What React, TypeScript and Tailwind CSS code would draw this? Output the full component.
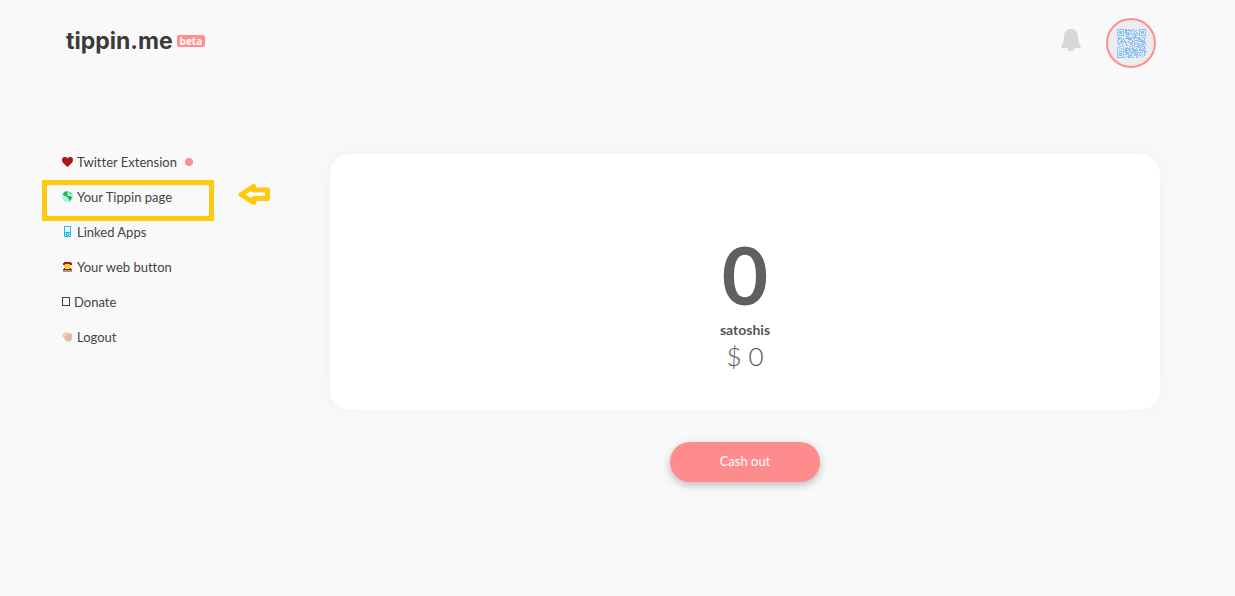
import React from "react";

const QR_SIZE = 29;

// The three corner squares every QR code carries
function finderModule(x: number, y: number): boolean | null {
  const corners = [
    [0, 0],
    [QR_SIZE - 7, 0],
    [0, QR_SIZE - 7],
  ];
  for (const [cx, cy] of corners) {
    const dx = x - cx;
    const dy = y - cy;
    if (dx >= -1 && dx <= 7 && dy >= -1 && dy <= 7) {
      const d = Math.max(Math.abs(dx - 3), Math.abs(dy - 3));
      return d !== 2 && d !== 4;
    }
  }
  return null;
}

function buildQrPath() {
  let d = "";
  let seed = 7919;
  for (let y = 0; y < QR_SIZE; y++) {
    for (let x = 0; x < QR_SIZE; x++) {
      seed = (seed * 16807) % 2147483647;
      const finder = finderModule(x, y);
      const on = finder === null ? seed % 100 < 52 : finder;
      if (on) d += `M${x} ${y}h1v1h-1z`;
    }
  }
  return d;
}

const qrPath = buildQrPath();

function QrCode() {
  return (
    <svg className="size-[29px]" viewBox="0 0 29 29" shapeRendering="crispEdges" aria-hidden="true">
      <rect width="29" height="29" fill="#dfebf8" />
      <path d={qrPath} fill="#8fbfec" />
    </svg>
  );
}

function BellIcon() {
  return (
    <svg className="h-6 w-5" viewBox="0 0 20 24" fill="#d8d8d8" aria-hidden="true">
      <path d="M10 1C6 1 3.200 3.500 3 8c-.2 5-.8 7.500-2.600 9.800-.5.700-.4 2.200.6 2.200h18c1 0 1.100-1.500.600-2.200C17.800 15.500 17.200 13 17 8 16.800 3.500 14 1 10 1Z" />
      <path d="M6.500 20a3.500 3.200 0 0 0 7 0Z" />
    </svg>
  );
}

function HeartIcon() {
  return (
    <svg className="h-[10px] w-[11px]" viewBox="0 0 11 10" fill="#b01515" aria-hidden="true">
      <path d="M5.500 1.600C4.600 0 2.800-.3 1.400.3 0 1-.3 3 .3 4.500 1.200 6.500 3.600 8.200 5.500 10c1.900-1.800 4.300-3.500 5.200-5.500.600-1.500.300-3.500-1.100-4.200C8.200-.3 6.400 0 5.500 1.600Z" />
    </svg>
  );
}

function GlobeIcon() {
  return (
    <svg className="size-[11px]" viewBox="0 0 11 11" aria-hidden="true">
      <circle cx="5.500" cy="5.500" r="5.500" fill="#a5f3ee" />
      <path d="M1 2.500 3 .5h3V2H5v1h1v1H5v1h4v1h1v1L9 8v1L7 10V8H6V6H4V5H2V4H1Z" fill="#2fb344" />
      <path d="M7.500.8 9.500 2.500 9 3.500 8 3Z" fill="#2fb344" />
    </svg>
  );
}

function PhoneIcon() {
  return (
    <svg className="size-[11px]" viewBox="0 0 11 11" aria-hidden="true">
      <path d="M2 0h7v11H2Z" fill="#25bdf0" />
      <path d="M3 1h5v5H3ZM3 7h1v1H3ZM5 8h1v1H5ZM7 7h1v1H7ZM3 9h1v1H3ZM7 9h1v1H7Z" fill="#f4fbfe" />
    </svg>
  );
}

function GuardIcon() {
  return (
    <svg className="h-[10px] w-[11px]" viewBox="0 0 11 10" aria-hidden="true">
      <path d="M2 0h7v1h1v2H1V1h1Z" fill="#b01515" />
      <path d="M1 7h1V6h7v1h1v1H1Z" fill="#b01515" />
      <path d="M3 2h5v1h1v2H8v2H3V5H2V3h1Z" fill="#fcd03c" />
      <path d="M1 8h9v2H1Z" fill="#999" />
    </svg>
  );
}

function WaveIcon() {
  return (
    <svg className="size-[11px]" viewBox="0 0 11 11" aria-hidden="true">
      <path
        d="M1 4.500 5 9M2 2.500 6 7M4 1.500 7.500 5.500M6.500 2 9 5M9.500 2.500V7"
        stroke="#e2b9a3"
        strokeWidth="1.200"
        strokeLinecap="round"
      />
      <path d="M3 5.500 6 3.500 9 5l1-2v5L8 10.500H5L2.500 8Z" fill="#e2b9a3" />
    </svg>
  );
}

const navItems = [
  { label: "Twitter Extension", icon: <HeartIcon />, dot: true },
  { label: "Your Tippin page", icon: <GlobeIcon />, highlighted: true },
  { label: "Linked Apps", icon: <PhoneIcon /> },
  { label: "Your web button", icon: <GuardIcon /> },
  { label: "Donate", icon: <span className="h-[9px] w-2 border border-[#444]" /> },
  { label: "Logout", icon: <WaveIcon /> },
];

function Highlight() {
  return (
    <>
      <span className="pointer-events-none absolute top-px -left-5 h-[41px] w-[172px] border-[5px] border-[#ffc90e]" />
      <svg
        className="pointer-events-none absolute top-[5px] left-44 h-[21px] w-8"
        viewBox="0 0 32 21"
        aria-hidden="true"
      >
        <path
          d="M3 10.500 15.500 2.500V6H29.500V14.500H15.500V18.500Z"
          fill="#fff"
          stroke="#ffc90e"
          strokeWidth="5"
          strokeLinejoin="round"
        />
      </svg>
    </>
  );
}

export default function App() {
  return (
    <div className="min-h-screen bg-[#f9f9f9] font-['Lato',sans-serif] text-[#444] [font-variant-ligatures:none]">
      <header className="flex h-[86px] items-center justify-between pr-[79px] pl-[66px]">
        <a href="#" className="flex items-center gap-1 pb-1">
          <span className="font-['Inter',sans-serif] text-[23px] leading-8 font-bold text-[#3a3a3a]">
            tippin.me
          </span>
          <span className="rounded-xs bg-[#ff8e8e] px-[3px] font-['Open_Sans',sans-serif] text-[10px] leading-3 font-bold text-white">
            beta
          </span>
        </a>
        <div className="flex items-center gap-[25px]">
          <button type="button" aria-label="Notifications" className="pb-1.5">
            <BellIcon />
          </button>
          <button
            type="button"
            aria-label="Profile"
            className="flex size-[50px] items-center justify-center rounded-full border-2 border-[#ff8e8e] bg-[#ececee]"
          >
            <QrCode />
          </button>
        </div>
      </header>

      <div className="flex items-start pt-[58px] pr-[75px] pl-[62px]">
        <nav className="w-[268px] shrink-0">
          <ul>
            {navItems.map((item) => (
              <li key={item.label} className="relative flex h-[35px] items-center">
                <a href="#" className="flex items-center gap-1 text-[13px] leading-5">
                  {item.icon}
                  {item.label}
                </a>
                {item.dot && <span className="ml-2 size-2 rounded-full bg-[#ff8e8e]" />}
                {item.highlighted && <Highlight />}
              </li>
            ))}
          </ul>
        </nav>

        <main className="flex flex-1 flex-col items-center pt-[10px]">
          <section className="flex w-full flex-col items-center rounded-[20px] bg-white pt-[78px] pb-[38px] shadow-[0_0_20px_rgba(0,0,0,0.04)]">
            <p className="text-[80px] leading-[84px] font-bold text-[#606060]">0</p>
            <p className="mt-1 text-sm font-bold text-[#555]">satoshis</p>
            <p className="text-[26px] leading-8 font-light text-[#555]">$ 0</p>
          </section>
          <button
            type="button"
            className="mt-8 h-10 w-[150px] rounded-full bg-[#ff8c8c] text-[13px] text-white shadow-[0_3px_8px_rgba(0,0,0,0.25)]"
          >
            Cash out
          </button>
        </main>
      </div>
    </div>
  );
}
